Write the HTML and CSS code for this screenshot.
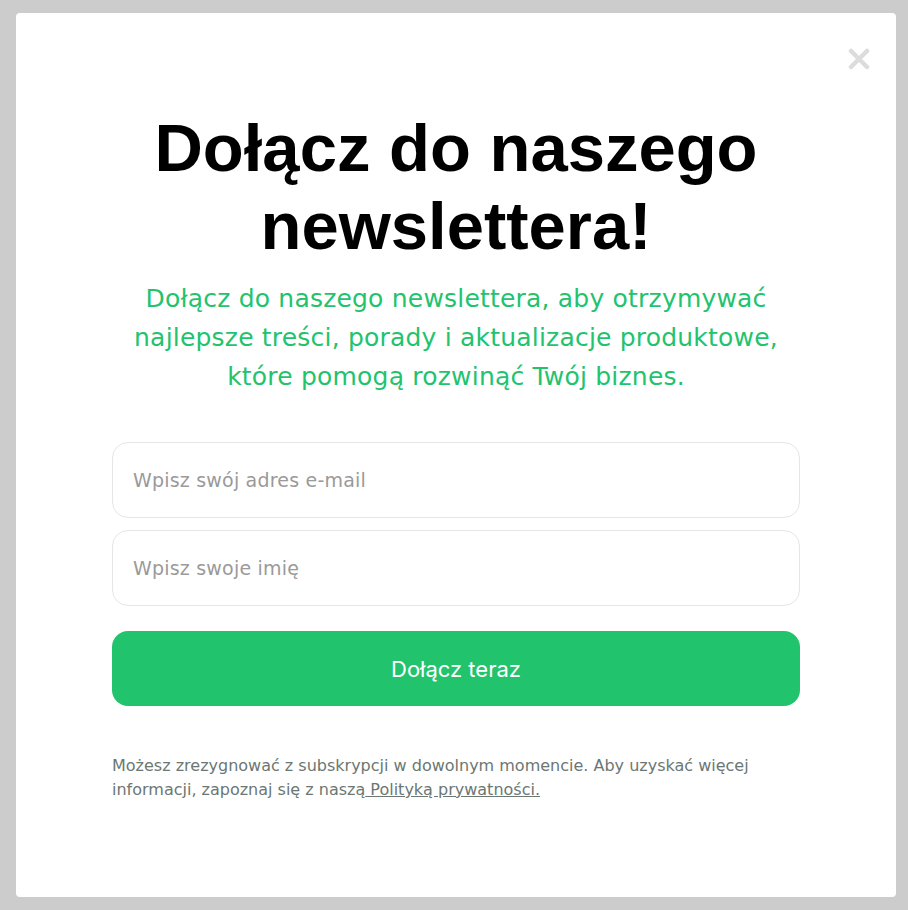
FILE: index.html
```html
<!DOCTYPE html>
<html lang="pl">
<head>
    <meta charset="UTF-8">
    <title>Newsletter</title>
    <link rel="stylesheet" href="styles.css">
</head>
<body>
    <div class="modal">
        <button class="close" aria-label="Zamknij">
            <svg width="22" height="22" viewBox="0 0 22 22">
                <path d="M3 3 L19 19 M19 3 L3 19" stroke="#dcdcdc" stroke-width="4.5" stroke-linecap="round"/>
            </svg>
        </button>

        <h1 class="title">Dołącz do naszego newslettera!</h1>
        <p class="lead">Dołącz do naszego newslettera, aby otrzymywać najlepsze treści, porady i aktualizacje produktowe, które pomogą rozwinąć Twój biznes.</p>

        <form class="signup">
            <input type="email" placeholder="Wpisz swój adres e-mail">
            <input type="text" placeholder="Wpisz swoje imię">
            <button type="button" class="submit">Dołącz teraz</button>
        </form>

        <p class="note">Możesz zrezygnować z subskrypcji w dowolnym momencie. Aby uzyskać więcej informacji, zapoznaj się z naszą<a href="#"> Polityką prywatności.</a></p>
    </div>
</body>
</html>
```

FILE: styles.css
```css
body, html {
    margin: 0;
    height: 100%;
}
body {
    background: #cccccc;
    padding: 13px 12px 13px 16px;
    box-sizing: border-box;
    font-family: "DejaVu Sans", "Open Sans", sans-serif;
}
.modal {
    position: relative;
    background: #fff;
    border-radius: 4px;
    height: 884px;
    padding: 96px 96px 0 96px;
    box-sizing: border-box;
}
.close {
    position: absolute;
    top: 35px;
    right: 26px;
    border: none;
    background: none;
    padding: 0;
    cursor: pointer;
}
.title {
    margin: 0;
    font-family: "Liberation Sans", Arial, sans-serif;
    font-weight: bold;
    font-size: 67px;
    line-height: 78px;
    text-align: center;
    color: #000;
}
.lead {
    margin: 14px auto 0;
    max-width: 655px;
    font-size: 25px;
    letter-spacing: 0.2px;
    line-height: 39px;
    text-align: center;
    color: #22c36d;
}
.signup {
    margin-top: 46px;
    display: flex;
    flex-direction: column;
    gap: 12px;
}
.signup input {
    height: 76px;
    box-sizing: border-box;
    border: 1px solid #e6e6e6;
    border-radius: 16px;
    padding: 0 20px;
    font-family: "DejaVu Sans", sans-serif;
    font-size: 19px;
    letter-spacing: 0.2px;
    outline: none;
}
.signup input::placeholder {
    color: #9a9a9a;
}
.submit {
    margin-top: 13px;
    height: 75px;
    border: none;
    border-radius: 16px;
    background: #22c36d;
    color: #fff;
    font-family: Inter, sans-serif;
    font-size: 22px;
    cursor: pointer;
}
.note {
    margin: 48px 0 0;
    font-size: 16px;
    line-height: 24px;
    color: #6b7773;
}
.note a {
    color: #6b7773;
}
```
